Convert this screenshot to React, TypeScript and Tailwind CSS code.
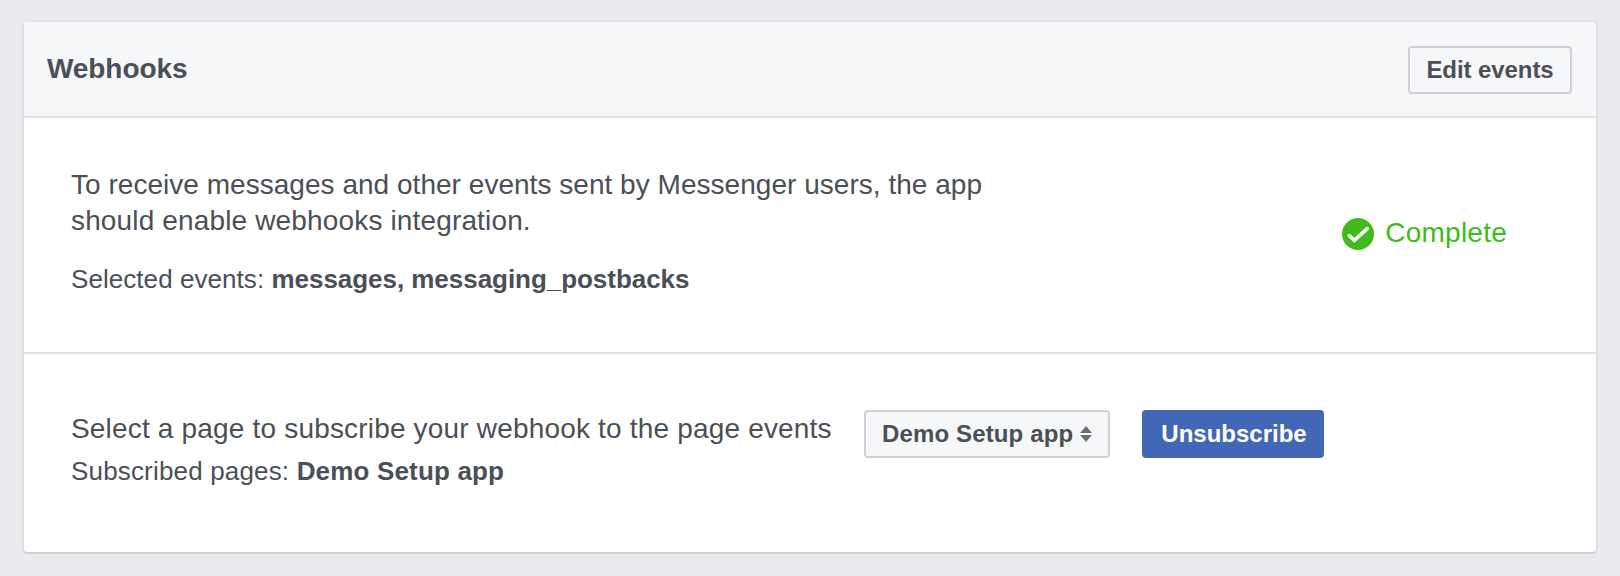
function CompleteIcon() {
  return (
    <svg width="32" height="32" viewBox="0 0 32 32" className="mt-0.5 shrink-0">
      <circle cx="16" cy="16" r="16" fill="#3fbb1a" />
      <path d="M7.2 17.6 12.4 22.3 25.2 10.6" fill="none" stroke="#fff" strokeWidth="3.6" strokeLinecap="round" />
    </svg>
  );
}

function SortArrows() {
  return (
    <svg width="12" height="16" viewBox="0 0 12 16" className="shrink-0" fill="#6b6e76">
      <path d="M6 0 12 7H0Z" />
      <path d="M0 9H12L6 16Z" />
    </svg>
  );
}

export default function App() {
  return (
    <div className="h-[576px] w-[1620px] bg-[#e9ebee] px-[22px] pt-5 font-['Liberation_Sans',Arial,sans-serif] whitespace-nowrap text-[#4b4f56]">
      <section className="flex h-[534px] w-[1576px] flex-col overflow-hidden rounded-md border-2 border-[#dddfe2] border-t-[#e4e5e8] border-b-[#cfd0d4] bg-white">
        <header className="flex h-24 shrink-0 items-start justify-between border-b-2 border-[#e1e2e4] bg-[#f6f7f9] pr-6 pl-[23px]">
          <h2 className="pt-[29px] text-[28px] leading-9 font-bold tracking-[-0.08px]">Webhooks</h2>
          <button className="mt-6 flex h-12 w-[164px] items-center justify-center rounded border-2 border-[#ced0d4] text-[24px] leading-7 font-bold tracking-[-0.08px]">
            Edit events
          </button>
        </header>

        <div className="flex h-[236px] shrink-0 justify-between border-b-2 border-[#e1e2e4] pr-[89px] pl-[47px]">
          <div className="pt-[49px] text-[28px] leading-9">
            <p>
              <span className="tracking-[0.03px]">To receive messages and other events sent by Messenger users, the app</span>
              <br />
              <span className="tracking-[0.15px]">should enable webhooks integration.</span>
            </p>
            <p className="mt-[22px] text-[26px] tracking-[0.06px]">
              Selected events: <strong className="tracking-[-0.04px]">messages, messaging_postbacks</strong>
            </p>
          </div>
          <div className="mt-[97px] flex h-9 items-center gap-[11px] text-[28px] leading-9 tracking-[0.24px] text-[#3fbb1a]">
            <CompleteIcon />
            <span>Complete</span>
          </div>
        </div>

        <div className="flex grow items-start pl-[47px]">
          <div className="w-[793px] shrink-0 pt-[57px] text-[28px] leading-9">
            <p className="tracking-[0.18px]">Select a page to subscribe your webhook to the page events</p>
            <p className="mt-1.5 text-[26px] tracking-[0.17px]">
              Subscribed pages: <strong>Demo Setup app</strong>
            </p>
          </div>
          <div className="mt-14 flex gap-8 text-[24px] leading-7 font-bold">
            <button className="flex h-12 w-[246px] items-center gap-[7px] rounded border-2 border-[#ced0d4] bg-[#f6f7f9] pl-4 tracking-[0.14px]">
              Demo Setup app
              <SortArrows />
            </button>
            <button className="flex h-12 w-[182px] items-center justify-center rounded bg-[#4267b7] pl-0.5 text-white">
              Unsubscribe
            </button>
          </div>
        </div>
      </section>
    </div>
  );
}
